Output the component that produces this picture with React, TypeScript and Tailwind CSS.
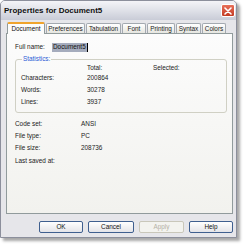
import React from "react";

const font = { fontFamily: '"Liberation Sans", Arial, sans-serif' };

function Tab({ label, w, selected }: { label: string; w: number; selected?: boolean }) {
  if (selected) {
    return (
      <div
        className="relative z-10 -mb-[1px] flex h-[12px] items-center justify-center rounded-t-[2px] border-x border-t-2 border-x-[#919b9c] border-t-[#f0a42c] bg-[#fcfcfb] text-[6.4px] leading-[8px] text-[#111]"
        style={{ width: w }}
      >
        {label}
      </div>
    );
  }
  return (
    <div
      className="flex h-[10px] items-center justify-center rounded-t-[2px] border-x border-t border-[#a3a9b0] bg-gradient-to-b from-[#ffffff] to-[#e6e6e0] text-[6.4px] leading-[8px] text-[#222]"
      style={{ width: w }}
    >
      {label}
    </div>
  );
}

function Btn({ label, disabled, w }: { label: string; disabled?: boolean; w: number }) {
  return (
    <div
      className={
        "flex h-[12px] items-center justify-center rounded-[2px] border text-[6.4px] leading-[8px] " +
        (disabled
          ? "border-[#c9c7ba] bg-[#f3f3ef] text-[#b3b1a6]"
          : "border-[#3f5f8f] bg-gradient-to-b from-[#ffffff] to-[#e4e4e8] text-[#111]")
      }
      style={{ width: w }}
    >
      {label}
    </div>
  );
}

export default function App() {
  return (
    <div className="h-[244px] w-[243px] bg-white" style={font}>
      <div className="flex h-[238px] w-[237px] flex-col rounded-t-[5px] border border-[#8c8f9c] bg-[#e6e6ea] shadow-[3px_3px_3px_rgba(0,0,0,0.35)]">
        {/* title bar */}
        <div className="flex h-[19px] items-center justify-between rounded-t-[4px] bg-gradient-to-b from-[#f4f4f8] via-[#dfe1e8] to-[#c9ccd7] pl-[3px] pr-[1px]">
          <span className="text-[8px] font-bold leading-[10px] text-[#111]">Properties for Document5</span>
          <div className="flex h-[13px] w-[14px] items-center justify-center rounded-[2px] border border-white bg-gradient-to-b from-[#e8705a] to-[#c23a22]">
            <svg width="8" height="8" viewBox="0 0 8 8">
              <path d="M1 1 L7 7 M7 1 L1 7" stroke="white" strokeWidth="1.6" strokeLinecap="round" />
            </svg>
          </div>
        </div>

        {/* body */}
        <div className="flex flex-col pl-[5px] pt-[2px]">
          <div className="ml-[1px] flex items-end gap-[1px]">
            <Tab label="Document" w={38} selected />
            <Tab label="Preferences" w={39} />
            <Tab label="Tabulation" w={35} />
            <Tab label="Font" w={24} />
            <Tab label="Printing" w={28} />
            <Tab label="Syntax" w={25} />
            <Tab label="Colors" w={24} />
          </div>
          <div className="flex h-[181px] w-[227px] flex-col border border-[#919b9c] bg-gradient-to-b from-[#fcfcfc] to-[#f2f2ee] pl-[8px] text-[6.4px] leading-[8px] text-[#222]">
            <div className="mt-[8px] flex h-[10px] items-center">
              <span className="w-[37px]">Full name:</span>
              <span className="flex h-[9px] items-center bg-[#a5acbd] px-[1px] text-[#111]">Document5</span>
              <span className="h-[9px] w-[1px] bg-black" />
            </div>

            <fieldset className="mt-[3px] w-[212px] rounded-[3px] border border-[#d0d0c4] pb-[5px] pl-[5px]">
              <legend className="ml-[1px] px-[1px] text-[6.4px] leading-[8px] text-[#2a5bd6]">Statistics:</legend>
              <div className="flex h-[9px] items-center">
                <span className="w-[66px]" />
                <span className="w-[66px]">Total:</span>
                <span>Selected:</span>
              </div>
              <div className="flex h-[12px] items-center">
                <span className="w-[66px]">Characters:</span>
                <span>200864</span>
              </div>
              <div className="flex h-[12px] items-center">
                <span className="w-[66px]">Words:</span>
                <span>30278</span>
              </div>
              <div className="flex h-[11px] items-center">
                <span className="w-[66px]">Lines:</span>
                <span>3937</span>
              </div>
            </fieldset>

            <div className="mt-[6px] flex h-[10px] items-center">
              <span className="w-[66px]">Code set:</span>
              <span>ANSI</span>
            </div>
            <div className="mt-[2px] flex h-[10px] items-center">
              <span className="w-[66px]">File type:</span>
              <span>PC</span>
            </div>
            <div className="mt-[2px] flex h-[10px] items-center">
              <span className="w-[66px]">File size:</span>
              <span>208736</span>
            </div>
            <div className="mt-[3px] flex h-[10px] items-center">
              <span className="w-[66px]">Last saved at:</span>
            </div>
          </div>

          <div className="mt-[7px] flex w-[227px] justify-end gap-[5px]">
            <Btn label="OK" w={44} />
            <Btn label="Cancel" w={46} />
            <Btn label="Apply" w={45} disabled />
            <Btn label="Help" w={44} />
          </div>
        </div>
      </div>
    </div>
  );
}
